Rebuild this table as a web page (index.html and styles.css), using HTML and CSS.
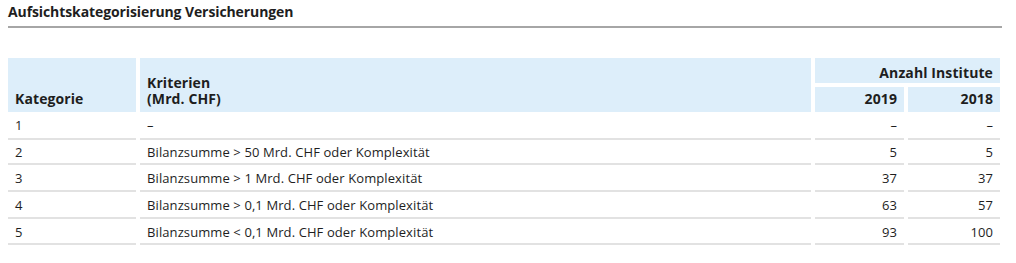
FILE: index.html
```html
<!DOCTYPE html>
<html lang="de">
<head>
<meta charset="utf-8">
<title>Aufsichtskategorisierung Versicherungen</title>
<link rel="stylesheet" href="styles.css">
</head>
<body>
<div class="page">
  <h1 class="title">Aufsichtskategorisierung Versicherungen</h1>
  <div class="table">
    <div class="head">
      <div class="hcell kat">Kategorie</div>
      <div class="hcell krit"><span>Kriterien</span><span>(Mrd. CHF)</span></div>
      <div class="hcell anz">Anzahl Institute</div>
      <div class="hcell y1 num">2019</div>
      <div class="hcell y2 num">2018</div>
    </div>
    <div class="body">
      <div class="cell">1</div><div class="cell">–</div><div class="cell num">–</div><div class="cell num">–</div>
      <div class="cell">2</div><div class="cell">Bilanzsumme &gt; 50 Mrd. CHF oder Komplexität</div><div class="cell num">5</div><div class="cell num">5</div>
      <div class="cell">3</div><div class="cell">Bilanzsumme &gt; 1 Mrd. CHF oder Komplexität</div><div class="cell num">37</div><div class="cell num">37</div>
      <div class="cell">4</div><div class="cell">Bilanzsumme &gt; 0,1 Mrd. CHF oder Komplexität</div><div class="cell num">63</div><div class="cell num">57</div>
      <div class="cell">5</div><div class="cell">Bilanzsumme &lt; 0,1 Mrd. CHF oder Komplexität</div><div class="cell num">93</div><div class="cell num">100</div>
    </div>
  </div>
</div>
</body>
</html>
```
FILE: styles.css
```css
html, body {
  margin: 0;
  padding: 0;
  background: #ffffff;
}
body {
  font-family: "Open Sans", "Noto Sans", sans-serif;
  color: #1e1e1e;
}
.page {
  padding: 3px 14px 0 8px;
}
.title {
  margin: 0;
  font-size: 14px;
  font-weight: 700;
  line-height: 17px;
  padding-bottom: 6px;
  border-bottom: 2px solid #a6a6a6;
  letter-spacing: -0.1px;
}
.table {
  margin-top: 30px;
  width: 992px;
}
.head, .body {
  display: grid;
  grid-template-columns: 128px 671px 89px 92px;
  column-gap: 4px;
}
.head {
  grid-template-rows: 25px 25px;
  row-gap: 4px;
}
.hcell {
  background: #ddeefa;
  font-weight: 700;
  font-size: 14px;
  line-height: 16px;
  padding: 0 7px 5px 7px;
  display: flex;
  flex-direction: column;
  justify-content: flex-end;
  letter-spacing: 0.1px;
}
.kat { grid-column: 1; grid-row: 1 / 3; }
.krit { grid-column: 2; grid-row: 1 / 3; }
.anz { grid-column: 3 / 5; grid-row: 1; text-align: right; padding-bottom: 2px; }
.y1 { grid-column: 3; grid-row: 2; }
.y2 { grid-column: 4; grid-row: 2; }
.num { text-align: right; }
.body {
  grid-auto-rows: 26.7px;
}
.cell {
  font-size: 13px;
  line-height: 14px;
  padding: 6px 7px 0 7px;
  border-bottom: 2px solid #e2e2e2;
  box-sizing: border-box;
  letter-spacing: 0.1px;
}
.body .cell:nth-child(-n+4) {
  height: 28px;
}
```
